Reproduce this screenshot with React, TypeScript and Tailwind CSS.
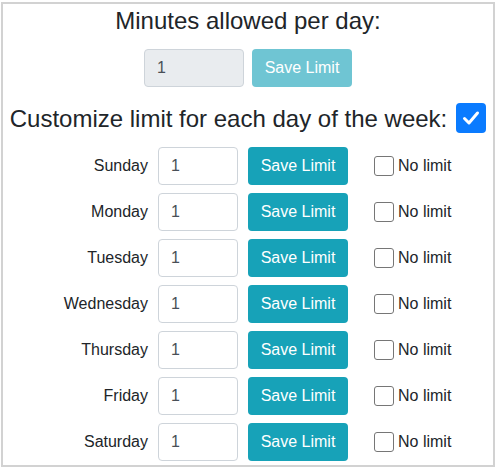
import React from "react";

const days = ["Sunday", "Monday", "Tuesday", "Wednesday", "Thursday", "Friday", "Saturday"];

export default function App() {
  return (
    <div className="w-[497px] h-[469px] bg-white pt-[2px] pl-[1px]" style={{ fontFamily: '"Liberation Sans", Arial, sans-serif' }}>
      <div className="w-[494px] h-[465px] border-2 border-[#d2d2d2] box-border text-[#212529]">
        <div className="flex flex-col items-center pt-[2px]">
          <h4 className="text-[24px] leading-[29px] font-medium">Minutes allowed per day:</h4>
          <div className="flex gap-[8px] mt-[14px]">
            <div className="w-[100px] h-[38px] rounded-[4px] border border-[#ced4da] bg-[#e9ecef] px-[12px] flex items-center text-[16px] text-[#495057]">1</div>
            <div className="w-[100px] h-[38px] rounded-[4px] bg-[#6fc5d3] text-white text-[16px] flex items-center justify-center">Save Limit</div>
          </div>
          <div className="flex items-center gap-[9px] mt-[16px] h-[30px]">
            <span className="text-[24px] leading-[29px] font-medium">Customize limit for each day of the week:</span>
            <div className="w-[30px] h-[30px] rounded-[4px] bg-[#0a7bff] flex items-center justify-center">
              <svg width="20" height="20" viewBox="0 0 20 20">
                <path d="M3.5 10.5 L8 15 L16.5 5" fill="none" stroke="white" strokeWidth="3" strokeLinecap="round" strokeLinejoin="round" />
              </svg>
            </div>
          </div>
        </div>
        <div className="mt-[14px] flex flex-col gap-[8px]">
          {days.map((d) => (
            <div key={d} className="grid grid-cols-[145px_80px_100px_auto] gap-x-[10px] items-center h-[38px]">
              <span className="text-right text-[16px]">{d}</span>
              <div className="h-[38px] rounded-[4px] border border-[#ced4da] bg-white px-[12px] flex items-center text-[16px] text-[#495057]">1</div>
              <div className="h-[38px] rounded-[4px] bg-[#17a2b8] text-white text-[16px] flex items-center justify-center">Save Limit</div>
              <label className="flex items-center ml-[16px] text-[16px]">
                <span className="w-[20px] h-[20px] rounded-[3px] border border-[#767676] bg-white inline-block" />
                <span className="ml-[4px]">No limit</span>
              </label>
            </div>
          ))}
        </div>
      </div>
    </div>
  );
}
